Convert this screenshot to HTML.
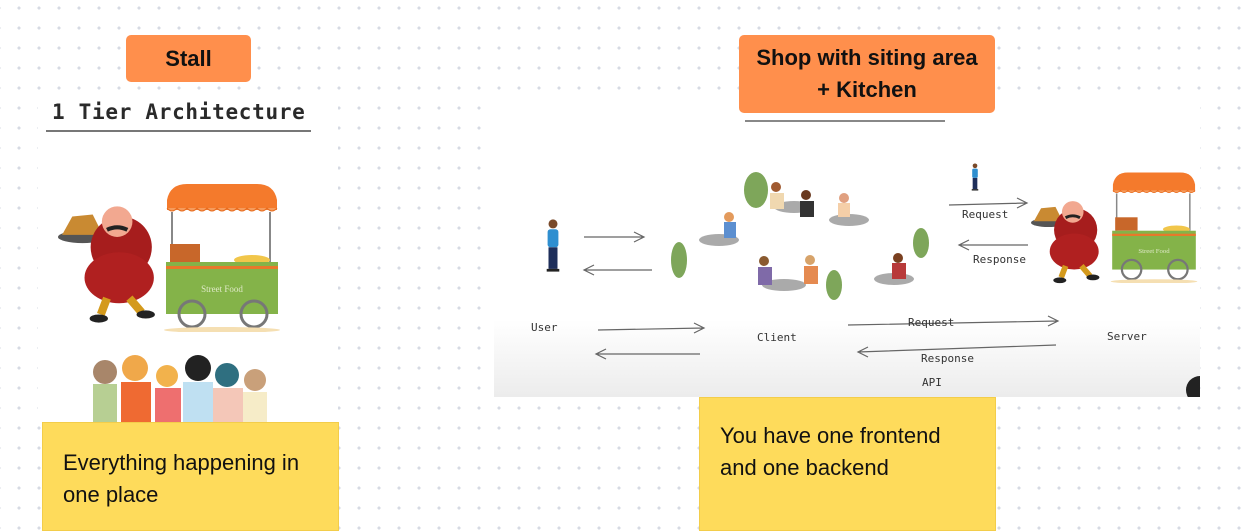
<!DOCTYPE html>
<html><head><meta charset="utf-8"><style>
body{margin:0;width:1246px;height:531px;overflow:hidden;position:relative;background-color:#fff;
background-image:radial-gradient(circle,#d6dae3 1.4px,transparent 1.7px);background-size:20px 20px;background-position:9px -2px;font-family:"Liberation Sans",sans-serif}
.abs{position:absolute}
.or{background:#ff8f4c;border-radius:5px;color:#111;font-weight:bold;font-size:22px;text-align:center}
.ye{background:#fedb5b;color:#111;font-size:22px;line-height:32px;border:1px solid #f3cd4a;box-sizing:border-box}
.mono{font-family:"DejaVu Sans Mono","Liberation Mono",monospace;color:#333}
</style></head><body>
<svg width="0" height="0" style="position:absolute"><defs>
<symbol id="cart" viewBox="0 0 120 150">
<path d="M5 18 Q8 2 25 2 L95 2 Q112 2 115 18 L115 28 L5 28Z" fill="#f47a2c"/>
<path d="M5 26 Q10 32 15 26 Q20 32 25 26 Q30 32 35 26 Q40 32 45 26 Q50 32 55 26 Q60 32 65 26 Q70 32 75 26 Q80 32 85 26 Q90 32 95 26 Q100 32 105 26 Q110 32 115 26" fill="#f59b5c" stroke="#e86d1f"/>
<line x1="10" y1="30" x2="10" y2="80" stroke="#888" stroke-width="2"/><line x1="108" y1="30" x2="108" y2="80" stroke="#888" stroke-width="2"/>
<rect x="8" y="62" width="30" height="18" fill="#c8672a"/><ellipse cx="90" cy="78" rx="18" ry="5" fill="#f1c64a"/>
<rect x="4" y="80" width="112" height="52" fill="#84b349"/><rect x="4" y="84" width="112" height="3" fill="#e8782a"/>
<text x="60" y="110" font-size="9" fill="#dfe9c8" text-anchor="middle" font-family="Liberation Serif">Street Food</text>
<circle cx="30" cy="132" r="13" fill="none" stroke="#777" stroke-width="3"/><circle cx="92" cy="132" r="13" fill="none" stroke="#777" stroke-width="3"/>
<ellipse cx="60" cy="148" rx="58" ry="3" fill="#f5dfb2"/>
</symbol>
<symbol id="man" viewBox="0 0 100 115">
<ellipse cx="24" cy="30" rx="24" ry="6" fill="#555"/><path d="M4 28 L14 10 L34 8 L44 28Z" fill="#c98a32"/>
<ellipse cx="62" cy="40" rx="30" ry="30" fill="#a61d1d"/><ellipse cx="60" cy="70" rx="34" ry="25" fill="#b02020"/>
<circle cx="58" cy="15" r="15" fill="#f2a890"/><path d="M48 23 Q58 18 68 23" stroke="#222" stroke-width="4" fill="none"/>
<path d="M48 90 L42 106 M70 90 L82 104" stroke="#d49a1c" stroke-width="8"/><ellipse cx="40" cy="110" rx="9" ry="4" fill="#222"/><ellipse cx="86" cy="106" rx="9" ry="4" fill="#222"/>
</symbol>
<symbol id="person" viewBox="0 0 20 60"><circle cx="10" cy="6" r="5" fill="#7a4a2a"/><rect x="4" y="12" width="12" height="20" rx="3" fill="#2f8fd0"/><rect x="5" y="32" width="10" height="24" fill="#1e2e5a"/><rect x="3" y="56" width="14" height="3" fill="#222"/></symbol>
</defs></svg>

<div class="abs or" style="left:126px;top:35px;width:125px;height:47px;line-height:47px">Stall</div>

<div class="abs" style="left:38px;top:95px;width:300px;height:330px;background:#fff"></div>
<div class="abs mono" style="left:52px;top:100px;font-size:21px;font-weight:bold;letter-spacing:0.7px;color:#2a2a2a">1 Tier Architecture</div>
<div class="abs" style="left:46px;top:130px;width:265px;height:2px;background:#777"></div>
<svg class="abs" style="left:160px;top:182px" width="124" height="150"><use href="#cart"/></svg>
<svg class="abs" style="left:58px;top:200px" width="102" height="130"><use href="#man"/></svg>
<svg class="abs" style="left:85px;top:350px" width="195" height="75">
<g><circle cx="20" cy="22" r="12" fill="#a8866a"/><rect x="8" y="34" width="24" height="40" fill="#b7cf93"/>
<circle cx="50" cy="18" r="13" fill="#f0a84a"/><rect x="36" y="32" width="30" height="42" fill="#ef6a32"/>
<circle cx="82" cy="26" r="11" fill="#f2b24c"/><rect x="70" y="38" width="26" height="36" fill="#ee6f6f"/>
<circle cx="113" cy="18" r="13" fill="#222"/><rect x="98" y="32" width="30" height="42" fill="#bfe0f2"/>
<circle cx="142" cy="25" r="12" fill="#2f6f80"/><rect x="128" y="38" width="30" height="36" fill="#f4c7b8"/>
<circle cx="170" cy="30" r="11" fill="#c9a07a"/><rect x="158" y="42" width="24" height="32" fill="#f6ecc8"/></g>
</svg>
<div class="abs ye" style="left:42px;top:422px;width:297px;height:109px;padding:24px 0 0 20px">Everything happening in one place</div>

<div class="abs" style="left:494px;top:95px;width:706px;height:302px;background:linear-gradient(#fff 0,#fff 225px,#ececec 302px)"></div>
<div class="abs" style="left:745px;top:120px;width:200px;height:2px;background:#888"></div>
<svg class="abs" style="left:494px;top:95px" width="706" height="302" font-family="DejaVu Sans Mono,monospace" font-size="11" fill="#333">
<g stroke="#666" stroke-width="1.2" fill="none">
<path d="M90 142 L150 142 M140 137 L150 142 L140 147"/><path d="M158 175 L90 175 M100 170 L90 175 L100 180"/>
<path d="M104 235 L210 233 M200 228 L210 233 L200 238"/><path d="M206 259 L102 259 M112 254 L102 259 L112 264"/>
<path d="M354 230 L564 226 M554 221 L564 226 L554 231"/><path d="M562 250 L364 257 M374 252 L364 257 L374 262"/>
<path d="M455 110 L533 108 M523 103 L533 108 L523 113"/><path d="M534 150 L465 150 M475 145 L465 150 L475 155"/>
</g>
<text x="37" y="236">User</text><text x="263" y="246">Client</text><text x="613" y="245">Server</text>
<text x="414" y="231">Request</text><text x="427" y="267">Response</text><text x="428" y="291">API</text>
<text x="468" y="123">Request</text><text x="479" y="168">Response</text>
<use href="#person" x="50" y="118" width="18" height="65"/>
<use href="#person" x="476" y="68" width="10" height="28"/>
<g><ellipse cx="225" cy="145" rx="20" ry="6" fill="#aaa"/><ellipse cx="300" cy="112" rx="20" ry="6" fill="#aaa"/><ellipse cx="355" cy="125" rx="20" ry="6" fill="#aaa"/><ellipse cx="290" cy="190" rx="22" ry="6" fill="#aaa"/><ellipse cx="400" cy="184" rx="20" ry="6" fill="#aaa"/></g>
<g><circle cx="235" cy="122" r="5" fill="#e39a5c"/><rect x="230" y="127" width="12" height="16" fill="#5c8fd0"/>
<circle cx="282" cy="92" r="5" fill="#a05a30"/><rect x="276" y="98" width="14" height="16" fill="#f0d8b0"/>
<circle cx="312" cy="100" r="5" fill="#6a3a20"/><rect x="306" y="106" width="14" height="16" fill="#333"/>
<circle cx="350" cy="103" r="5" fill="#e0a080"/><rect x="344" y="108" width="12" height="14" fill="#f5cfa8"/>
<circle cx="270" cy="166" r="5" fill="#8a5a30"/><rect x="264" y="172" width="14" height="18" fill="#7f6aa8"/>
<circle cx="316" cy="165" r="5" fill="#d7a36a"/><rect x="310" y="171" width="14" height="18" fill="#e58a50"/>
<circle cx="404" cy="163" r="5" fill="#7a4020"/><rect x="398" y="168" width="14" height="16" fill="#b83a3a"/></g>
<g fill="#7ea65a"><ellipse cx="262" cy="95" rx="12" ry="18"/><ellipse cx="185" cy="165" rx="8" ry="18"/><ellipse cx="340" cy="190" rx="8" ry="15"/><ellipse cx="427" cy="148" rx="8" ry="15"/></g>
<use href="#man" x="537" y="105" width="72" height="85"/>
<use href="#cart" x="615" y="76" width="90" height="112"/>
<circle cx="706" cy="295" r="14" fill="#222"/>
</svg>
<div class="abs or" style="left:739px;top:35px;width:256px;height:78px;line-height:32px;padding-top:7px;box-sizing:border-box">Shop with siting area<br>+ Kitchen</div>
<div class="abs ye" style="left:699px;top:397px;width:297px;height:134px;padding:22px 50px 0 20px">You have one frontend and one backend</div>
</body></html>
